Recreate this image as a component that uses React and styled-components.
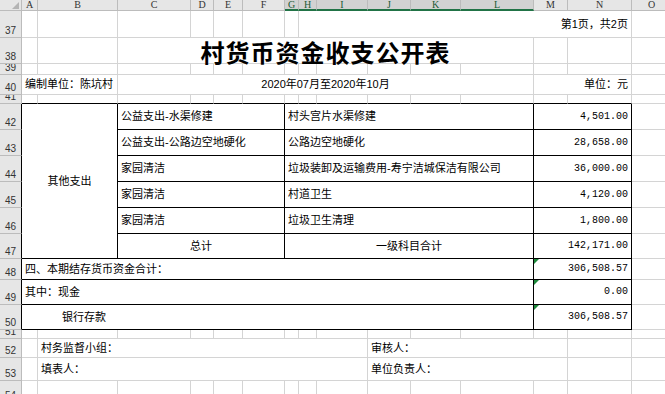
import React from "react";
import styled, { createGlobalStyle, css } from "styled-components";

const GlobalStyle = createGlobalStyle`
  html, body {
    margin: 0;
    padding: 0;
    background: #fff;
    overflow: hidden;
  }
  body {
    font-family: "Liberation Sans", "Noto Sans CJK SC", sans-serif;
  }
`;

const COLS = ["A", "B", "C", "D", "E", "F", "G", "H", "I", "J", "K", "L", "M", "N", "O"];
const COL_W = [16, 80, 73, 23, 29, 42, 14, 18, 51, 43, 50, 73, 34, 64, 40];
const ROW_H = {
  37: 27, 38: 26, 39: 11, 40: 20, 41: 9, 42: 26, 43: 26, 44: 26, 45: 26, 46: 26,
  47: 25, 48: 21, 49: 25, 50: 25, 51: 9, 52: 19, 53: 23, 54: 22
};
const ROWS = Object.keys(ROW_H).map(Number);
const SELECTED = ["G", "H", "I", "J", "K", "L"];

const GRID = "#d4d4d4";
const HEAD_LINE = "#bcbcbc";
const BLACK = "#000";

const col = (l) => COLS.indexOf(l) + 2;
const gridRow = (n) => n - 35;
const inTable = (r, c) => r >= 42 && r <= 50 && c >= col("A") && c <= col("N");

const items = [
  ["公益支出-水渠修建", "村头宫片水渠修建", "4,501.00"],
  ["公益支出-公路边空地硬化", "公路边空地硬化", "28,658.00"],
  ["家园清洁", "垃圾装卸及运输费用-寿宁洁城保洁有限公司", "36,000.00"],
  ["家园清洁", "村道卫生", "4,120.00"],
  ["家园清洁", "垃圾卫生清理", "1,800.00"]
];

const cells = [
  { r: 37, from: "H", to: "N", text: "第1页，共2页", align: "right", kind: "note" },
  { r: 38, from: "C", to: "L", text: "村货币资金收支公开表", align: "center", kind: "title" },
  { r: 40, from: "A", to: "B", text: "编制单位：陈坑村" },
  { r: 40, from: "C", to: "L", text: "2020年07月至2020年10月", align: "center" },
  { r: 40, from: "M", to: "N", text: "单位：元", align: "right" },
  { r: 42, rs: 6, from: "A", to: "B", text: "其他支出", align: "center" },
  ...items.flatMap(([a, b, n], i) => [
    { r: 42 + i, from: "C", to: "F", text: a },
    { r: 42 + i, from: "G", to: "L", text: b },
    { r: 42 + i, from: "M", to: "N", text: n, align: "right", kind: "num" }
  ]),
  { r: 47, from: "C", to: "F", text: "总计", align: "center" },
  { r: 47, from: "G", to: "L", text: "一级科目合计", align: "center" },
  { r: 47, from: "M", to: "N", text: "142,171.00", align: "right", kind: "num" },
  { r: 48, from: "A", to: "L", text: "四、本期结存货币资金合计：" },
  { r: 48, from: "M", to: "N", text: "306,508.57", align: "right", kind: "num", flag: true },
  { r: 49, from: "A", to: "L", text: "其中：现金" },
  { r: 49, from: "M", to: "N", text: "0.00", align: "right", kind: "num", flag: true },
  { r: 50, from: "A", to: "L", text: "银行存款", indent: 40 },
  { r: 50, from: "M", to: "N", text: "306,508.57", align: "right", kind: "num", flag: true },
  { r: 52, from: "B", to: "I", text: "村务监督小组：" },
  { r: 52, from: "J", to: "M", text: "审核人：" },
  { r: 53, from: "B", to: "I", text: "填表人：" },
  { r: 53, from: "J", to: "M", text: "单位负责人：" }
];

const Sheet = styled.div`
  display: grid;
  grid-template-columns: 22px ${COL_W.map((w) => `${w}px`).join(" ")};
  grid-template-rows: 11px ${ROWS.map((r) => `${ROW_H[r]}px`).join(" ")};
  width: 665px;
  height: 394px;
  overflow: hidden;
  background: #fff;
`;

const Corner = styled.div`
  grid-column: 1;
  grid-row: 1;
  background: #e6e6e6;
  border-right: 1px solid ${HEAD_LINE};
  border-bottom: 1px solid ${HEAD_LINE};
  box-sizing: border-box;
  display: flex;
  align-items: flex-start;
  justify-content: flex-end;
  padding: 2px 2px 0 0;
`;

const ColHead = styled.div`
  grid-column: ${(p) => p.$c};
  grid-row: 1;
  box-sizing: border-box;
  background: ${(p) => (p.$sel ? "#d2d2d2" : "#e6e6e6")};
  border-right: 1px solid ${HEAD_LINE};
  border-bottom: ${(p) => (p.$sel ? "2px solid #217346" : `1px solid ${HEAD_LINE}`)};
  color: ${(p) => (p.$sel ? "#1c5a36" : "#333")};
  font-family: "Liberation Serif", serif;
  font-size: 10px;
  line-height: 10px;
  text-align: center;
  overflow: hidden;
`;

const RowHead = styled.div`
  grid-column: 1;
  grid-row: ${(p) => p.$r};
  box-sizing: border-box;
  background: #e6e6e6;
  border-right: 1px solid ${(p) => (p.$edge ? BLACK : HEAD_LINE)};
  border-bottom: 1px solid ${HEAD_LINE};
  color: #333;
  font-family: "Liberation Sans", sans-serif;
  font-size: 10px;
  line-height: 10px;
  display: flex;
  align-items: flex-end;
  justify-content: center;
  padding-bottom: 1px;
  overflow: hidden;
`;

const kinds = {
  title: css`
    font-family: "Noto Sans CJK SC", sans-serif;
    font-weight: 700;
    font-size: 24px;
    letter-spacing: 1px;
    padding-top: 3px;
  `,
  num: css`
    font-family: "Liberation Mono", monospace;
    font-size: 10px;
  `,
  note: css`
    font-size: 11px;
  `
};

const Cell = styled.div`
  grid-column: ${(p) => p.$c} / span ${(p) => p.$cs};
  grid-row: ${(p) => p.$r} / span ${(p) => p.$rs};
  position: relative;
  box-sizing: border-box;
  min-width: 0;
  border-right: 1px solid ${(p) => p.$right};
  border-bottom: 1px solid ${(p) => p.$bottom};
  display: flex;
  align-items: center;
  justify-content: ${(p) =>
    p.$align === "right" ? "flex-end" : p.$align === "center" ? "center" : "flex-start"};
  padding: 0 3px 0 ${(p) => p.$indent || 3}px;
  font-size: 11px;
  line-height: 1;
  color: #000;
  white-space: nowrap;
  ${(p) => p.$kind && kinds[p.$kind]}
`;

const Flag = styled.span`
  position: absolute;
  left: 0;
  top: 0;
  width: 0;
  height: 0;
  border-top: 5px solid #1e8a3c;
  border-right: 5px solid transparent;
`;

function buildCells() {
  const covered = new Set();
  const out = [];
  cells.forEach((cell, i) => {
    const c = col(cell.from);
    const cs = col(cell.to) - c + 1;
    const rs = cell.rs || 1;
    for (let r = cell.r; r < cell.r + rs; r++)
      for (let k = c; k < c + cs; k++) covered.add(`${r}-${k}`);
    const boxed = inTable(cell.r, c);
    out.push(
      <Cell
        key={`c${i}`}
        $c={c}
        $cs={cs}
        $r={gridRow(cell.r)}
        $rs={rs}
        $align={cell.align}
        $kind={cell.kind}
        $indent={cell.indent}
        $right={boxed ? BLACK : GRID}
        $bottom={boxed ? BLACK : GRID}
      >
        {cell.flag && <Flag />}
        {cell.text}
      </Cell>
    );
  });
  ROWS.forEach((r) => {
    COLS.forEach((l) => {
      const c = col(l);
      if (covered.has(`${r}-${c}`)) return;
      const topEdge = r === 41 && c <= col("N");
      out.push(
        <Cell
          key={`e${r}-${l}`}
          $c={c}
          $cs={1}
          $r={gridRow(r)}
          $rs={1}
          $right={GRID}
          $bottom={topEdge ? BLACK : GRID}
        />
      );
    });
  });
  return out;
}

export default function App() {
  return (
    <>
      <GlobalStyle />
      <Sheet>
        <Corner>
          <svg width="7" height="7" viewBox="0 0 7 7">
            <path d="M7 0 L7 7 L0 7 Z" fill="#b4b4b4" />
          </svg>
        </Corner>
        {COLS.map((l) => (
          <ColHead key={l} $c={col(l)} $sel={SELECTED.includes(l)}>
            {l}
          </ColHead>
        ))}
        {ROWS.map((r) => (
          <RowHead key={r} $r={gridRow(r)} $edge={r >= 42 && r <= 50}>
            {r}
          </RowHead>
        ))}
        {buildCells()}
      </Sheet>
    </>
  );
}
